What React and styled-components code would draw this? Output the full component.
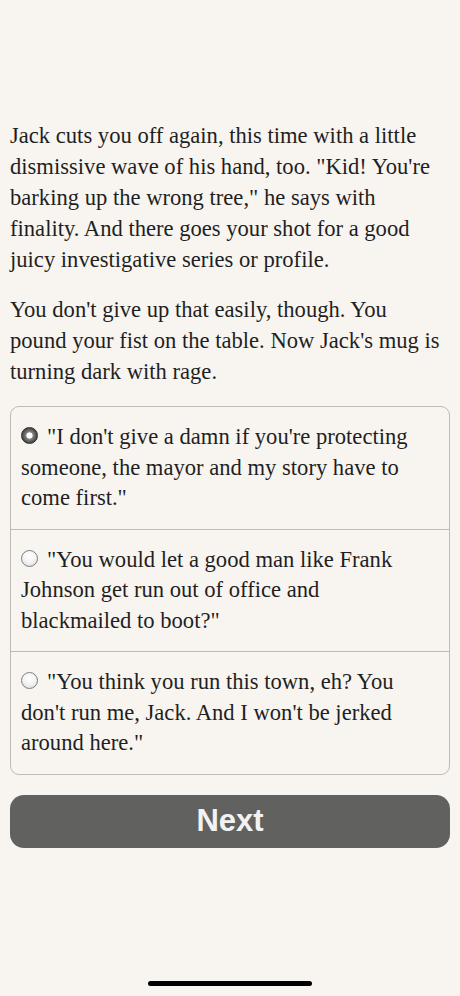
import React, { useState } from 'react';
import styled, { createGlobalStyle } from 'styled-components';

const GlobalStyle = createGlobalStyle`
  html, body {
    margin: 0;
    padding: 0;
    background: #f8f5f1;
  }
  #root {
    min-height: 996px;
  }
`;

const Page = styled.div`
  width: 460px;
  height: 996px;
  box-sizing: border-box;
  padding: 120px 10px 0;
  display: flex;
  flex-direction: column;
  background: #f8f5f1;
  color: #1f1f1f;
  font-family: "Liberation Serif", "DejaVu Serif", serif;
`;

const Story = styled.p`
  margin: 0 0 19px;
  font-size: 22.6px;
  line-height: 31px;
  white-space: nowrap;
`;

const Choices = styled.div`
  border: 1px solid #bdbbb8;
  border-radius: 9px;
  overflow: hidden;
`;

const Choice = styled.label`
  display: block;
  padding: 15px 10px 15px;
  font-size: 22.6px;
  line-height: 30.5px;
  white-space: nowrap;
  cursor: pointer;
  & + & {
    border-top: 1px solid #bdbbb8;
  }
`;

const Radio = styled.span`
  display: inline-block;
  width: 17px;
  height: 17px;
  box-sizing: border-box;
  border-radius: 50%;
  margin: 0 9px 0 0;
  vertical-align: 0px;
  border: 1px solid ${p => (p.$on ? '#2e2e2e' : '#7d7d7d')};
  background: ${p =>
    p.$on
      ? 'radial-gradient(circle, #ffffff 0 2.8px, #888 3.4px, #444 7.5px)'
      : 'radial-gradient(circle at 50% 35%, #ffffff 0, #f3f3f3 50%, #d6d6d6 100%)'};
`;

const NextButton = styled.button`
  margin-top: 20px;
  height: 53px;
  border: none;
  border-radius: 14px;
  background: #616160;
  color: #f2f2f2;
  font-family: "Liberation Sans", Arial, sans-serif;
  font-weight: 700;
  font-size: 31px;
  cursor: pointer;
`;

const Spacer = styled.div`
  flex: 1;
`;

const HomeBar = styled.div`
  align-self: center;
  width: 164px;
  height: 5px;
  border-radius: 3px;
  background: #000;
  margin-bottom: 10px;
`;

const Lines = ({ lines }) =>
  lines.map((l, i) => (
    <React.Fragment key={i}>
      {i > 0 && <br />}
      {l}
    </React.Fragment>
  ));

const options = [
  [`"I don't give a damn if you're protecting`, `someone, the mayor and my story have to`, `come first."`],
  [`"You would let a good man like Frank`, `Johnson get run out of office and`, `blackmailed to boot?"`],
  [`"You think you run this town, eh? You`, `don't run me, Jack. And I won't be jerked`, `around here."`],
];

const App = () => {
  const [picked, setPicked] = useState(0);

  return (
    <>
      <GlobalStyle />
      <Page>
        <Story>
          <Lines
            lines={[
              'Jack cuts you off again, this time with a little',
              `dismissive wave of his hand, too. "Kid! You're`,
              `barking up the wrong tree," he says with`,
              'finality. And there goes your shot for a good',
              'juicy investigative series or profile.',
            ]}
          />
        </Story>
        <Story>
          <Lines
            lines={[
              "You don't give up that easily, though. You",
              "pound your fist on the table. Now Jack's mug is",
              'turning dark with rage.',
            ]}
          />
        </Story>
        <Choices>
          {options.map((lines, i) => (
            <Choice key={i} onClick={() => setPicked(i)}>
              <Radio $on={picked === i} />
              <Lines lines={lines} />
            </Choice>
          ))}
        </Choices>
        <NextButton>Next</NextButton>
        <Spacer />
        <HomeBar />
      </Page>
    </>
  );
};

export default App;
